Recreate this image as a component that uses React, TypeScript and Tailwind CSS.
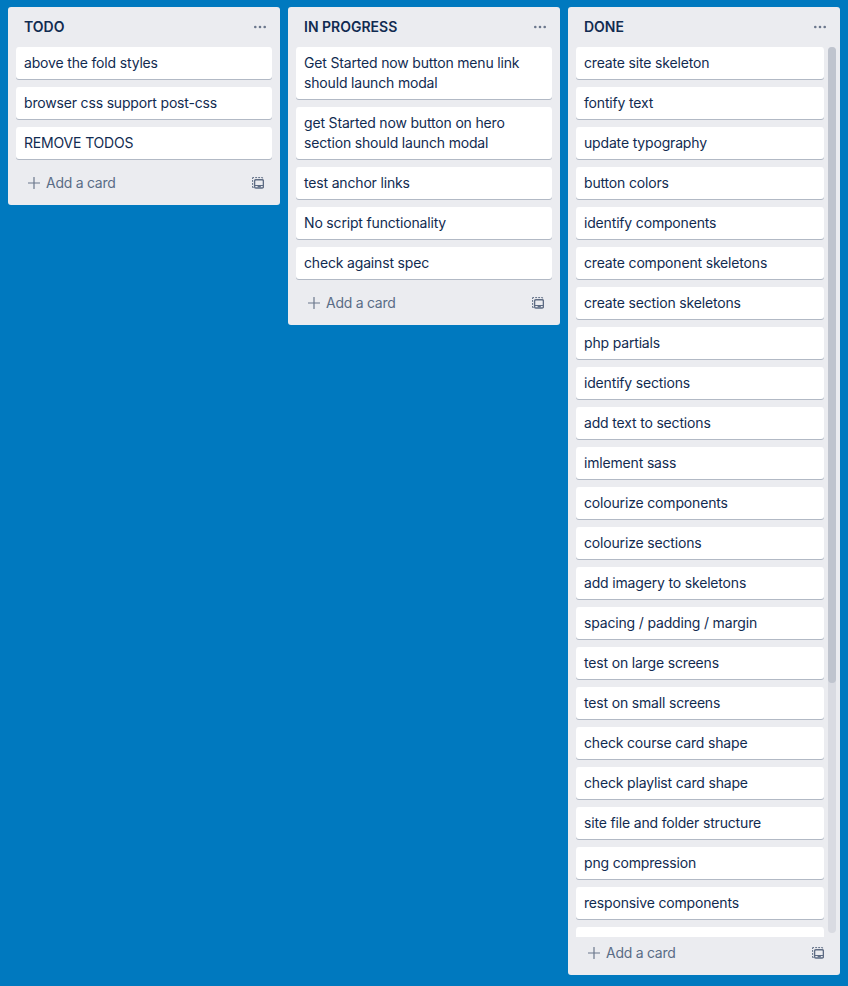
type ListData = { title: string; cards: string[]; overflowing?: boolean };

const lists: ListData[] = [
  { title: 'TODO', cards: ['above the fold styles', 'browser css support post-css', 'REMOVE TODOS'] },
  {
    title: 'IN PROGRESS',
    cards: [
      'Get Started now button menu link should launch modal',
      'get Started now button on hero section should launch modal',
      'test anchor links',
      'No script functionality',
      'check against spec',
    ],
  },
  {
    title: 'DONE',
    overflowing: true,
    cards: [
      'create site skeleton',
      'fontify text',
      'update typography',
      'button colors',
      'identify components',
      'create component skeletons',
      'create section skeletons',
      'php partials',
      'identify sections',
      'add text to sections',
      'imlement sass',
      'colourize components',
      'colourize sections',
      'add imagery to skeletons',
      'spacing / padding / margin',
      'test on large screens',
      'test on small screens',
      'check course card shape',
      'check playlist card shape',
      'site file and folder structure',
      'png compression',
      'responsive components',
      '',
    ],
  },
];

function MoreIcon() {
  return (
    <svg width="14" height="4" viewBox="0 0 14 4" fill="#6b778c">
      <circle cx="2.3" cy="2" r="1.3" />
      <circle cx="7" cy="2" r="1.3" />
      <circle cx="11.7" cy="2" r="1.3" />
    </svg>
  );
}

function PlusIcon() {
  return (
    <svg width="12" height="12" viewBox="0 0 12 12" stroke="#6b778c" strokeWidth="1.2" strokeLinecap="round">
      <path d="M6 .4v11.2M.4 6h11.2" />
    </svg>
  );
}

function TemplateIcon() {
  return (
    <svg width="12" height="12" viewBox="0 0 12 12" fill="none" stroke="#5e6c84">
      <path d="M.6 2V.6H2M3.2 .6h1.9M6.2 .6h1.9M9.2 .6h1.4v.8M.6 3v1.9M.6 6v1.9M.6 9v1.5H1.6" strokeWidth="1" />
      <rect x="2.6" y="2.8" width="8.8" height="8.2" rx="1.2" strokeWidth="1.4" />
      <path d="M3 8.5h8" strokeWidth="1" />
      <path d="M5.6 9.7h3.2" strokeWidth="1.4" />
    </svg>
  );
}

function Card({ text }: { text: string }) {
  return (
    <div className="min-h-8 shrink-0 rounded-[3px] bg-white px-2 py-1.5 leading-5 tracking-[-0.17px] text-[#112b51] shadow-[0_1px_0_rgba(9,30,66,0.25)]">
      {text}
    </div>
  );
}

function List({ title, cards, overflowing }: ListData) {
  return (
    <section className="flex w-[272px] shrink-0 flex-col rounded-[3px] bg-[#ebecf0] pb-1.5">
      <header className="flex h-10 shrink-0 items-center justify-between pr-[13px] pl-4">
        <h2 className="leading-5 font-semibold text-[#112b51]">{title}</h2>
        <MoreIcon />
      </header>
      {overflowing ? (
        <div className="flex h-[890px] pr-1 pl-2">
          <div className="flex flex-1 flex-col gap-2 overflow-hidden">
            {cards.map((c, i) => <Card key={i} text={c} />)}
          </div>
          <div className="ml-1 h-[886px] w-2 rounded bg-[#d9dbe2]">
            <div className="h-[636px] rounded bg-[#bfc4ce]" />
          </div>
        </div>
      ) : (
        <div className="flex flex-col gap-2 px-2 pb-2">
          {cards.map((c, i) => <Card key={i} text={c} />)}
        </div>
      )}
      <footer className="flex h-8 shrink-0 items-center pr-4 pl-5 text-[#5a6c86]">
        <PlusIcon />
        <span className="ml-1.5 flex-1 leading-5 tracking-[-0.26px]">Add a card</span>
        <TemplateIcon />
      </footer>
    </section>
  );
}

export default function App() {
  return (
    <main className="flex h-[986px] w-[848px] items-start gap-2 overflow-hidden bg-[#0079bf] px-2 pt-[7px] font-['Inter',sans-serif] text-[14px]">
      {lists.map((l) => <List key={l.title} {...l} />)}
    </main>
  );
}
